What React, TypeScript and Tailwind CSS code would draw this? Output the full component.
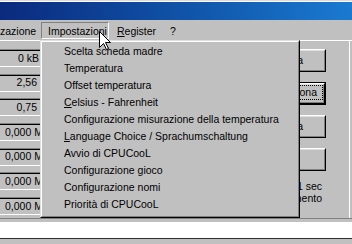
import React from "react";

const items: { t: string; u?: boolean }[] = [
  { t: "Scelta scheda madre" },
  { t: "Temperatura" },
  { t: "Offset temperatura" },
  { t: "Celsius - Fahrenheit", u: true },
  { t: "Configurazione misurazione della temperatura" },
  { t: "Language Choice / Sprachumschaltung", u: true },
  { t: "Avvio di CPUCooL" },
  { t: "Configurazione gioco" },
  { t: "Configurazione nomi" },
  { t: "Priorità di CPUCooL" },
];

const fields: { v: string; right: boolean; pad: string }[] = [
  { v: "0 kB", right: true, pad: "pr-[1px]" },
  { v: "2,56", right: true, pad: "pr-[3px]" },
  { v: "0,75", right: true, pad: "pr-[3px]" },
  { v: "0,000 MHz", right: false, pad: "pl-[5px]" },
  { v: "0,000 MHz", right: false, pad: "pl-[5px]" },
  { v: "0,000 MHz", right: false, pad: "pl-[5px]" },
  { v: "0,000 MHz", right: false, pad: "pl-[5px]" },
];

function Btn({ label, pad }: { label: string; pad: string }) {
  return (
    <div className="h-[23px] border border-t-white border-l-white border-r-black border-b-black">
      <div className={`h-full border border-t-[#dfdfdf] border-l-[#dfdfdf] border-r-[#808080] border-b-[#808080] flex items-center justify-end whitespace-nowrap overflow-hidden ${pad}`}>
        {label}
      </div>
    </div>
  );
}

export default function App() {
  return (
    <div className="relative w-[352px] h-[244px] overflow-hidden bg-[#c0c0c0] font-['Liberation_Sans',Arial,sans-serif] text-black text-[10.5px]">
      <div className="h-px bg-[#dcdcdc]" />
      <div className="h-px bg-white" />
      <div className="h-[18px] bg-gradient-to-r from-[#0b2a7e] to-[#1a7ad0]" />
      {/* menu bar */}
      <div className="h-[20px] flex items-start whitespace-nowrap">
        <span className="mt-[3px] leading-[17px] w-[41px]">zazione</span>
        <div className="mt-[2px] h-[17px] w-[68px] border border-t-[#808080] border-l-[#808080] border-b-white border-r-white pl-[6px] pt-[1px] leading-[15px]">
          Impostazioni
        </div>
        <span className="mt-[3px] leading-[17px] ml-[8px]">
          <span className="underline underline-offset-[1px]">R</span>egister
        </span>
        <span className="mt-[3px] leading-[17px] ml-[14px]">?</span>
      </div>
      <div className="h-px bg-white" />
      {/* content */}
      <div className="flex h-[177px] w-[350px] border-r border-white">
        <div className="w-[41px] pt-[8px] flex flex-col gap-[6.7px]">
          {fields.map((f, i) => (
            <div key={i} className="h-[18px] border-t border-t-[#808080] border-b border-b-white border-r border-r-white">
              <div className={`h-full border-t border-t-black flex items-center overflow-hidden whitespace-nowrap ${f.right ? "justify-end" : "justify-start"} ${f.pad}`}>
                {f.v}
              </div>
            </div>
          ))}
        </div>
        <div className="flex-1" />
        <div className="w-[86px] pt-[8px] flex flex-col">
          <Btn label="Cancella" pad="pr-[21px]" />
          <div className="mt-[10px] h-[23px] border border-black">
            <div className="h-full border border-t-white border-l-white border-r-black border-b-black">
              <div className="h-full border border-t-[#dfdfdf] border-l-[#dfdfdf] border-r-[#808080] border-b-[#808080]">
                <div className="h-[15px] border border-dotted border-black flex items-center justify-end pr-[5px] whitespace-nowrap overflow-hidden">
                  Seleziona
                </div>
              </div>
            </div>
          </div>
          <div className="mt-[10px]">
            <Btn label="Azzera" pad="pr-[21px]" />
          </div>
          <div className="mt-[10px]">
            <Btn label="" pad="pr-[21px]" />
          </div>
          <div className="mt-[9px] text-right pr-[4px] leading-[12px] whitespace-nowrap">
            <div>Intervallo 1 sec</div>
            <div>di aggiornamento</div>
          </div>
        </div>
        <div className="w-[23px]" />
      </div>
      <div className="h-px bg-[#808080]" />
      <div className="h-[3px]" />
      <div className="h-[16px] bg-white" />
      <div className="h-px bg-[#303030]" />

      {/* dropdown menu */}
      <div className="absolute left-[40px] top-[40px] w-[260px] h-[178px] bg-[#c0c0c0] border border-t-[#dfdfdf] border-l-[#dfdfdf] border-r-black border-b-black">
        <div className="h-full border border-t-white border-l-white border-r-[#808080] border-b-[#808080] pt-[1px] pl-[22px]">
          {items.map((it, i) => (
            <div key={i} className="leading-[17px] whitespace-nowrap">
              {it.u ? (
                <>
                  <span className="underline underline-offset-[1px]">{it.t[0]}</span>
                  {it.t.slice(1)}
                </>
              ) : (
                it.t
              )}
            </div>
          ))}
        </div>
      </div>

      {/* mouse cursor */}
      <svg className="absolute left-[99px] top-[31px]" width="13" height="20" viewBox="0 0 13 20">
        <polygon
          points="0.5,0.5 0.5,16.5 4.5,12.5 7.5,18.5 9.5,17.5 6.5,11.5 11.5,11.5"
          fill="white"
          stroke="black"
          strokeWidth="1"
          strokeLinejoin="miter"
        />
      </svg>
    </div>
  );
}
